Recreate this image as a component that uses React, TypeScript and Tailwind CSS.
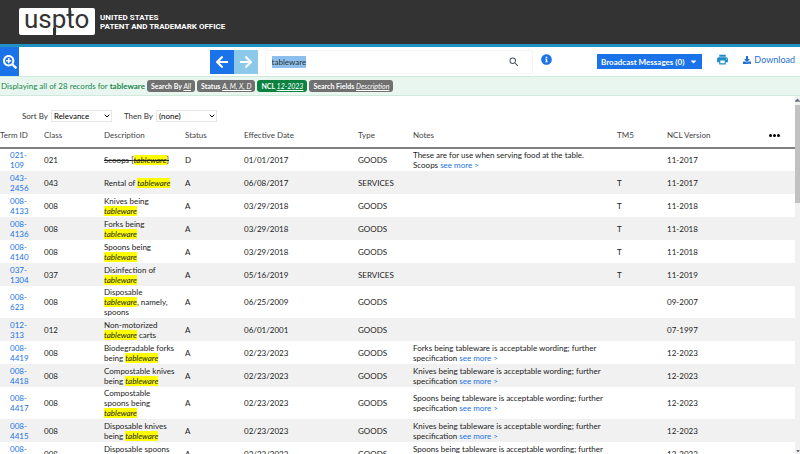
import { useEffect, useRef } from "react";
import {
    FaArrowLeft,
    FaArrowRight,
    FaCaretDown,
    FaDownload,
    FaInfoCircle,
    FaSearchPlus,
} from "react-icons/fa";
import { FiChevronDown } from "react-icons/fi";
import { MdPrint, MdSearch } from "react-icons/md";

type Term = {
    id: [string, string];
    cls: string;
    before: string;
    after?: string;
    status: string;
    date: string;
    type: string;
    notes?: string;
    tm5?: boolean;
    ncl: string;
};

const terms: Term[] = [
    { id: ["021-", "109"], cls: "021", before: "Scoops [", after: "]", status: "D", date: "01/01/2017", type: "GOODS", notes: "These are for use when serving food at the table. Scoops", ncl: "11-2017" },
    { id: ["043-", "2456"], cls: "043", before: "Rental of ", status: "A", date: "06/08/2017", type: "SERVICES", tm5: true, ncl: "11-2017" },
    { id: ["008-", "4133"], cls: "008", before: "Knives being ", status: "A", date: "03/29/2018", type: "GOODS", tm5: true, ncl: "11-2018" },
    { id: ["008-", "4136"], cls: "008", before: "Forks being ", status: "A", date: "03/29/2018", type: "GOODS", tm5: true, ncl: "11-2018" },
    { id: ["008-", "4140"], cls: "008", before: "Spoons being ", status: "A", date: "03/29/2018", type: "GOODS", tm5: true, ncl: "11-2018" },
    { id: ["037-", "1304"], cls: "037", before: "Disinfection of ", status: "A", date: "05/16/2019", type: "SERVICES", tm5: true, ncl: "11-2019" },
    { id: ["008-", "623"], cls: "008", before: "Disposable ", after: ", namely, spoons", status: "A", date: "06/25/2009", type: "GOODS", ncl: "09-2007" },
    { id: ["012-", "313"], cls: "012", before: "Non-motorized ", after: " carts", status: "A", date: "06/01/2001", type: "GOODS", ncl: "07-1997" },
    { id: ["008-", "4419"], cls: "008", before: "Biodegradable forks being ", status: "A", date: "02/23/2023", type: "GOODS", notes: "Forks being tableware is acceptable wording; further specification", ncl: "12-2023" },
    { id: ["008-", "4418"], cls: "008", before: "Compostable knives being ", status: "A", date: "02/23/2023", type: "GOODS", notes: "Knives being tableware is acceptable wording; further specification", ncl: "12-2023" },
    { id: ["008-", "4417"], cls: "008", before: "Compostable spoons being ", status: "A", date: "02/23/2023", type: "GOODS", notes: "Spoons being tableware is acceptable wording; further specification", ncl: "12-2023" },
    { id: ["008-", "4415"], cls: "008", before: "Disposable knives being ", status: "A", date: "02/23/2023", type: "GOODS", notes: "Knives being tableware is acceptable wording; further specification", ncl: "12-2023" },
    { id: ["008-", "4414"], cls: "008", before: "Disposable spoons being ", status: "A", date: "02/23/2023", type: "GOODS", notes: "Spoons being tableware is acceptable wording; further specification", ncl: "12-2023" },
];

const filters = [
    { label: "Search By", value: "All", color: "bg-[#707070]" },
    { label: "Status", value: "A, M, X, D", color: "bg-[#707070]" },
    { label: "NCL", value: "12-2023", color: "bg-[#0b8240]" },
    { label: "Search Fields", value: "Description", color: "bg-[#707070]" },
];

function Header() {
    return (
        <header className="flex h-[47px] shrink-0 items-start gap-[5px] border-b-3 border-[#2191c4] bg-[#333333] pl-[19px] pt-2 text-white">
            {/* Logo: the t and the p cut through the edges of the plate */}
            <svg className="h-7 w-[76px]" viewBox="0 0 76 28" role="img" aria-label="uspto">
                <rect width="76" height="27" rx="2" fill="#ffffff" />
                <rect x="34" y="20" width="3" height="8" fill="#333333" />
                <rect x="49.5" y="0" width="2.5" height="10" fill="#333333" />
                <text x="5" y="20" fontSize="26" fill="#333333" className="font-['Roboto']">
                    uspto
                </text>
            </svg>
            <div className="pt-[5px] font-['Roboto'] text-[8px] leading-[9px] font-bold">
                <p>UNITED STATES</p>
                <p>PATENT AND TRADEMARK OFFICE</p>
            </div>
        </header>
    );
}

function Toolbar() {
    const input = useRef<HTMLInputElement>(null);

    useEffect(() => {
        input.current?.focus();
        input.current?.select();
    }, []);

    return (
        <div className="flex h-[29px] shrink-0 items-center bg-white pr-[5px]">
            <button aria-label="Advanced search" className="flex h-full w-[19px] items-center justify-center bg-[#1a73e8] text-white">
                <FaSearchPlus className="size-[14px]" />
            </button>
            <div className="grow-[191] basis-0" />
            <button aria-label="Back" className="flex size-6 items-center justify-center bg-[#1a73e8] text-white">
                <FaArrowLeft className="size-[14px]" />
            </button>
            <button aria-label="Forward" className="flex size-6 items-center justify-center bg-[#8cc8ea] text-white">
                <FaArrowRight className="size-[14px]" />
            </button>
            <div className="w-[7px]" />
            <div className="flex h-6 grow-[267] basis-0 items-center rounded-xs border border-gray-100">
                <input
                    ref={input}
                    aria-label="Search terms"
                    defaultValue="tableware"
                    className="min-w-0 flex-1 pl-[6px] text-[8px] text-[#333333] outline-none selection:bg-[#8cbfee] selection:text-[#333333]"
                />
                <button aria-label="Search" className="pr-3">
                    <MdSearch className="size-3 text-gray-600" />
                </button>
            </div>
            <button aria-label="Help" className="mb-1 ml-2 text-[#1a73e8]">
                <FaInfoCircle className="size-[11px]" />
            </button>
            <button className="ml-[45px] flex h-[15px] items-center gap-[5px] bg-[#1a73e8] px-1 text-[8px] font-bold text-white">
                Broadcast Messages (0)
                <FaCaretDown className="size-[9px]" />
            </button>
            <button aria-label="Print" className="mb-1 ml-[14px] text-[#1e8cc7]">
                <MdPrint className="size-[13px]" />
            </button>
            <a href="#download" className="mb-1 ml-[14px] flex items-center gap-[3px] text-[9px] text-[#1f6fd0]">
                <FaDownload className="size-2" />
                Download
            </a>
        </div>
    );
}

function ResultBar() {
    return (
        <div className="flex h-5 shrink-0 items-center gap-[2px] border-y border-[#cfe9dc] bg-[#e9f6f0] pl-px text-[8px] text-[#17864a]">
            <p>
                Displaying all of 28 records for <b>tableware</b>
            </p>
            {filters.map((filter) => (
                <button
                    key={filter.label}
                    className={`h-3 rounded-[3px] px-1 text-[7px] leading-3 font-bold text-white ${filter.color}`}
                >
                    {filter.label} <span className="font-normal italic underline">{filter.value}</span>
                </button>
            ))}
        </div>
    );
}

function SortSelect({ id, label, options }: { id: string; label: string; options: string[] }) {
    return (
        <div className="flex items-center gap-[3px]">
            <label htmlFor={id}>{label}</label>
            <div className="relative">
                <select id={id} className="block h-3 w-[61px] appearance-none border border-gray-200 bg-white pl-[2px] text-[8px] leading-[10px] text-black">
                    {options.map((option) => (
                        <option key={option}>{option}</option>
                    ))}
                </select>
                <FiChevronDown className="pointer-events-none absolute top-[2px] right-[1px] size-2 stroke-3 text-black" />
            </div>
        </div>
    );
}

function TermTable() {
    return (
        <table className="w-full table-fixed border-collapse text-left text-[8px] leading-[10px] text-[#222222]">
            <colgroup>
                <col className="w-[44px]" />
                <col className="w-[60px]" />
                <col className="w-[81px]" />
                <col className="w-[59px]" />
                <col className="w-[114px]" />
                <col className="w-[55px]" />
                <col />
                <col className="w-[50px]" />
                <col className="w-[102px]" />
                <col className="w-[26px]" />
            </colgroup>
            <thead>
                <tr className="h-[26px] border-b-2 border-[#808080] align-top text-[#444444] [&>th]:pt-2 [&>th]:font-normal">
                    <th>Term ID</th>
                    <th>Class</th>
                    <th>Description</th>
                    <th>Status</th>
                    <th>Effective Date</th>
                    <th>Type</th>
                    <th>Notes</th>
                    <th>TM5</th>
                    <th>NCL Version</th>
                    <th>
                        <button aria-label="Column options" className="flex h-[10px] items-center gap-px">
                            <span className="size-[3px] rounded-full bg-black" />
                            <span className="size-[3px] rounded-full bg-black" />
                            <span className="size-[3px] rounded-full bg-black" />
                        </button>
                    </th>
                </tr>
            </thead>
            <tbody>
                {terms.map((term) => (
                    <tr key={term.id.join("")} className="h-[23px] even:bg-[#f1f1f1]">
                        <td className="pl-[10px]">
                            <a href={`#${term.id.join("")}`} className="text-[#1a73e8]">
                                {term.id[0]}
                                <br />
                                {term.id[1]}
                            </a>
                        </td>
                        <td>{term.cls}</td>
                        <td className={term.status === "D" ? "py-px pr-2 line-through" : "py-px pr-2"}>
                            {term.before}
                            <mark className="bg-[#ffff00] text-inherit italic">tableware</mark>
                            {term.after}
                        </td>
                        <td>{term.status}</td>
                        <td>{term.date}</td>
                        <td>{term.type}</td>
                        <td className="pr-3">
                            {term.notes && (
                                <>
                                    {term.notes}{" "}
                                    <a href="#more" className="text-[#1a73e8]">
                                        see more &gt;
                                    </a>
                                </>
                            )}
                        </td>
                        <td>{term.tm5 && "T"}</td>
                        <td>{term.ncl}</td>
                        <td />
                    </tr>
                ))}
            </tbody>
        </table>
    );
}

export default function App() {
    return (
        <div className="flex h-screen flex-col overflow-hidden bg-white font-['Lato',sans-serif]">
            <Header />
            <Toolbar />
            <ResultBar />
            <div className="flex min-h-0 flex-1">
                <main className="min-w-0 flex-1 overflow-hidden">
                    <div className="flex items-center gap-3 pt-[14px] pl-[22px] text-[8px] text-[#333333]">
                        <SortSelect id="sort" label="Sort By" options={["Relevance", "Term ID", "Class"]} />
                        <SortSelect id="then" label="Then By" options={["(none)", "Term ID", "Class"]} />
                    </div>
                    <TermTable />
                </main>
                {/* Scroll bar */}
                <div className="flex w-[5px] flex-col items-center justify-between bg-[#f1f1f1]">
                    <div className="flex h-full w-full flex-col items-center">
                        <FaCaretDown className="size-[9px] rotate-180 text-gray-500" />
                        <div className="h-[98px] w-full bg-[#c1c1c1]" />
                    </div>
                    <FaCaretDown className="size-[6px] text-gray-700" />
                </div>
            </div>
        </div>
    );
}
